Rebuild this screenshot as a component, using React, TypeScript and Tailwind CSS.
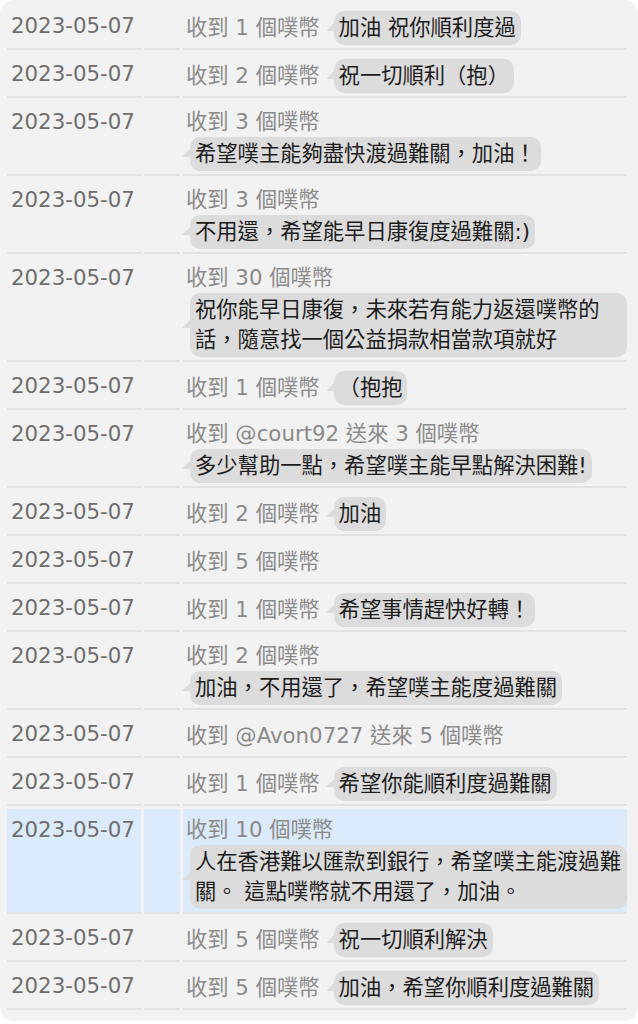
type Gift = {
  date: string;
  label: string;
  note?: string;
  stack?: boolean;
  hl?: boolean;
};

const gifts: Gift[] = [
  { date: "2023-05-07", label: "收到 1 個噗幣", note: "加油 祝你順利度過" },
  { date: "2023-05-07", label: "收到 2 個噗幣", note: "祝一切順利（抱）" },
  { date: "2023-05-07", label: "收到 3 個噗幣", note: "希望噗主能夠盡快渡過難關，加油！", stack: true },
  { date: "2023-05-07", label: "收到 3 個噗幣", note: "不用還，希望能早日康復度過難關:)", stack: true },
  {
    date: "2023-05-07",
    label: "收到 30 個噗幣",
    note: "祝你能早日康復，未來若有能力返還噗幣的話，隨意找一個公益捐款相當款項就好",
    stack: true,
  },
  { date: "2023-05-07", label: "收到 1 個噗幣", note: "（抱抱" },
  { date: "2023-05-07", label: "收到 @court92 送來 3 個噗幣", note: "多少幫助一點，希望噗主能早點解決困難!", stack: true },
  { date: "2023-05-07", label: "收到 2 個噗幣", note: "加油" },
  { date: "2023-05-07", label: "收到 5 個噗幣" },
  { date: "2023-05-07", label: "收到 1 個噗幣", note: "希望事情趕快好轉！" },
  { date: "2023-05-07", label: "收到 2 個噗幣", note: "加油，不用還了，希望噗主能度過難關", stack: true },
  { date: "2023-05-07", label: "收到 @Avon0727 送來 5 個噗幣" },
  { date: "2023-05-07", label: "收到 1 個噗幣", note: "希望你能順利度過難關" },
  {
    date: "2023-05-07",
    label: "收到 10 個噗幣",
    note: "人在香港難以匯款到銀行，希望噗主能渡過難關。 這點噗幣就不用還了，加油。",
    stack: true,
    hl: true,
  },
  { date: "2023-05-07", label: "收到 5 個噗幣", note: "祝一切順利解決" },
  { date: "2023-05-07", label: "收到 5 個噗幣", note: "加油，希望你順利度過難關" },
];

function Bubble({ text, className }: { text: string; className: string }) {
  return (
    <span
      className={`relative inline-block rounded-[10px] bg-[#dcdcdc] px-[5px] py-[2px] leading-[30px] text-[#1c1c1c] ${className}`}
    >
      <span className="absolute -left-[8px] top-[calc(50%-5px)] h-0 w-0 border-b-[8px] border-l-[8px] border-b-[#dcdcdc] border-l-transparent" />
      {text}
    </span>
  );
}

export default function App() {
  return (
    <div className="min-h-[1024px] bg-white">
      <div
        className="rounded-[14px] bg-[#f2f2f2] pb-[8px] pl-[4px] pr-[8px] pt-[2px] text-[21.3px]"
        style={{ fontFamily: '"DejaVu Sans", "Noto Sans CJK TC", sans-serif' }}
      >
        <table className="w-[626px] table-fixed border-separate border-spacing-[3px]">
          <colgroup>
            <col className="w-[134px]" />
            <col className="w-[36px]" />
            <col className="w-[444px]" />
          </colgroup>
          <tbody>
            {gifts.map((g, i) => {
              const cell = `border-b-2 border-[#e2e2e2] align-top ${g.hl ? "bg-[#dbebfb]" : ""}`;
              return (
                <tr key={i}>
                  <td className={`${cell} pb-[3px] pl-[4px] pt-[6px] leading-[30px] text-[#6e6e6e]`}>
                    {g.date}
                  </td>
                  <td className={cell} />
                  <td className={`${cell} pb-[3px] pl-[3px] pt-[6px]`}>
                    {g.stack ? (
                      <div>
                        <div className="leading-[30px] text-[#8a8a8a]">{g.label}</div>
                        <Bubble text={g.note ?? ""} className="ml-[4px]" />
                      </div>
                    ) : (
                      <div className="flex min-h-[34px] items-center">
                        <span className="leading-[30px] text-[#8a8a8a]">{g.label}</span>
                        {g.note && <Bubble text={g.note} className="ml-[14px] whitespace-nowrap" />}
                      </div>
                    )}
                  </td>
                </tr>
              );
            })}
          </tbody>
        </table>
      </div>
    </div>
  );
}
